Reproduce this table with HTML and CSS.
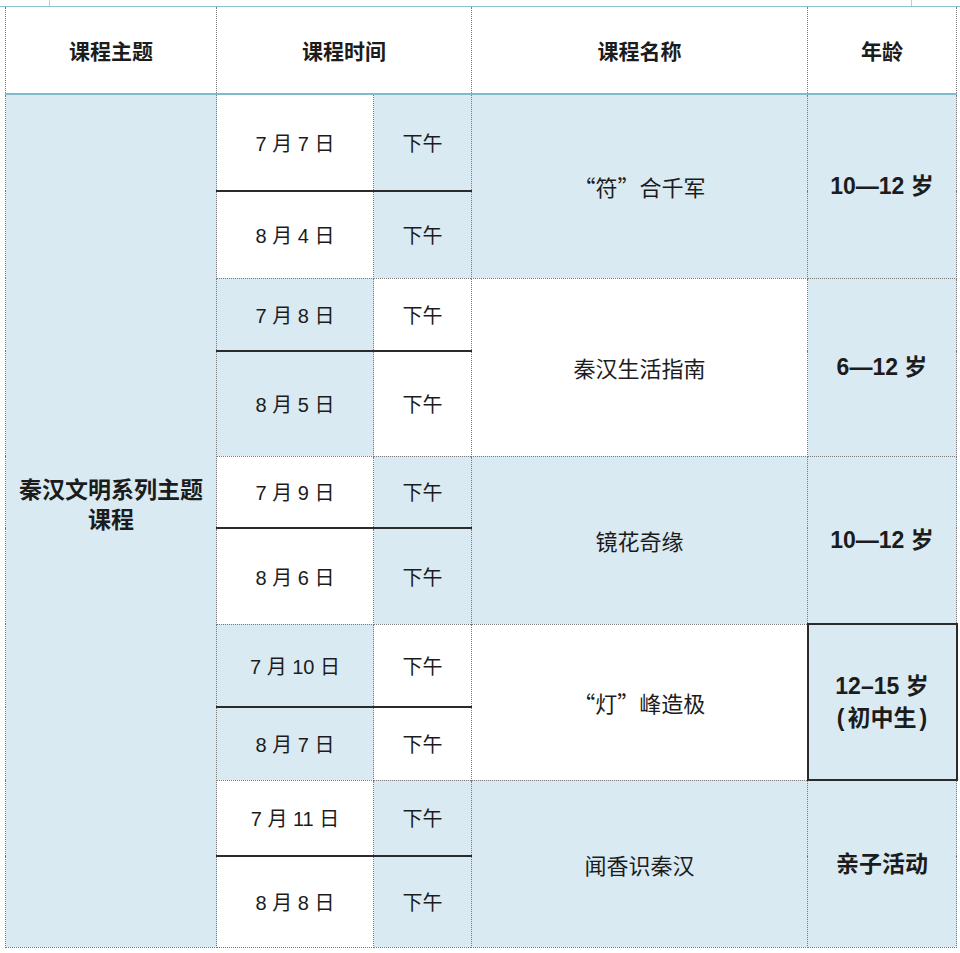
FILE: index.html
```html
<!DOCTYPE html>
<html lang="zh-CN">
<head>
<meta charset="utf-8">
<title>秦汉文明系列主题课程</title>
<link rel="stylesheet" href="styles.css">
</head>
<body>
<div class="topbar"><span class="tick"></span><span class="tick tick-right"></span></div>
<table class="schedule">
  <colgroup>
    <col class="c-theme"><col class="c-date"><col class="c-time"><col class="c-name"><col class="c-age">
  </colgroup>
  <thead>
    <tr class="r-head">
      <th>课程主题</th>
      <th colspan="2">课程时间</th>
      <th>课程名称</th>
      <th>年龄</th>
    </tr>
  </thead>
  <tbody>
    <tr class="r1">
      <td rowspan="10" class="theme blue">秦汉文明系列主题课程</td>
      <td class="date pair-top">7 月 7 日</td>
      <td class="time pair-top blue">下午</td>
      <td rowspan="2" class="name blue">“符”合千军</td>
      <td rowspan="2" class="age blue">10—12 岁</td>
    </tr>
    <tr class="r2">
      <td class="date">8 月 4 日</td>
      <td class="time blue">下午</td>
    </tr>
    <tr class="r3">
      <td class="date pair-top blue">7 月 8 日</td>
      <td class="time pair-top">下午</td>
      <td rowspan="2" class="name">秦汉生活指南</td>
      <td rowspan="2" class="age blue">6—12 岁</td>
    </tr>
    <tr class="r4">
      <td class="date blue">8 月 5 日</td>
      <td class="time">下午</td>
    </tr>
    <tr class="r5">
      <td class="date pair-top">7 月 9 日</td>
      <td class="time pair-top blue">下午</td>
      <td rowspan="2" class="name blue">镜花奇缘</td>
      <td rowspan="2" class="age blue">10—12 岁</td>
    </tr>
    <tr class="r6">
      <td class="date">8 月 6 日</td>
      <td class="time blue">下午</td>
    </tr>
    <tr class="r7">
      <td class="date pair-top blue">7 月 10 日</td>
      <td class="time pair-top">下午</td>
      <td rowspan="2" class="name">“灯”峰造极</td>
      <td rowspan="2" class="age blue boxed">12–15 岁<br><span class="paren">(</span>初中生<span class="paren">)</span></td>
    </tr>
    <tr class="r8">
      <td class="date blue">8 月 7 日</td>
      <td class="time">下午</td>
    </tr>
    <tr class="r9">
      <td class="date pair-top">7 月 11 日</td>
      <td class="time pair-top blue">下午</td>
      <td rowspan="2" class="name blue">闻香识秦汉</td>
      <td rowspan="2" class="age blue">亲子活动</td>
    </tr>
    <tr class="r10">
      <td class="date">8 月 8 日</td>
      <td class="time blue">下午</td>
    </tr>
  </tbody>
</table>
</body>
</html>
```

FILE: styles.css
```css
html, body {
  margin: 0;
  padding: 0;
  background: #ffffff;
}

body {
  font-family: "Liberation Sans", "Noto Sans CJK SC", sans-serif;
  color: #1c1c1c;
}

.topbar {
  display: flex;
  height: 6px;
  border-bottom: 1px solid #8cc3d3;
}

.tick {
  width: 1px;
  height: 6px;
  background: #c8c8c8;
  margin-left: 49px;
}

.tick-right {
  margin-left: auto;
  margin-right: 48px;
}

.schedule {
  margin-left: 5px;
  width: 951px;
  table-layout: fixed;
  border-collapse: collapse;
}

.c-theme { width: 211px; }
.c-date { width: 157px; }
.c-time { width: 98px; }
.c-name { width: 336px; }
.c-age { width: 149px; }

.schedule th,
.schedule td {
  border: 1px dotted #7a7a7a;
  padding: 0;
  text-align: center;
  vertical-align: middle;
}

.schedule th {
  border-top: none;
  border-bottom: 2px solid #80b9cc;
  background: #ffffff;
  font-size: 21px;
  font-weight: 700;
}

.blue {
  background: #daeaf2;
}

.schedule td.theme {
  font-size: 23px;
  font-weight: 700;
  line-height: 30px;
  padding: 0 10px 32px;
}

.date,
.time {
  font-size: 20px;
}

.name {
  font-family: "Noto Sans CJK SC", sans-serif;
  font-size: 22px;
}

.age {
  font-size: 23px;
  font-weight: 700;
  line-height: 32px;
}

.paren {
  display: inline-block;
  padding: 0 3px;
}

.schedule td.pair-top {
  border-bottom: 2px solid #2b2b2b;
}

.schedule td.boxed {
  border: 2px solid #2b2b2b;
}

.r-head { height: 87px; }
.r1 { height: 97px; }
.r2 { height: 87px; }
.r3 { height: 73px; }
.r4 { height: 105px; }
.r5 { height: 72px; }
.r6 { height: 96px; }
.r7 { height: 83px; }
.r8 { height: 73px; }
.r9 { height: 76px; }
.r10 { height: 91px; }
```
